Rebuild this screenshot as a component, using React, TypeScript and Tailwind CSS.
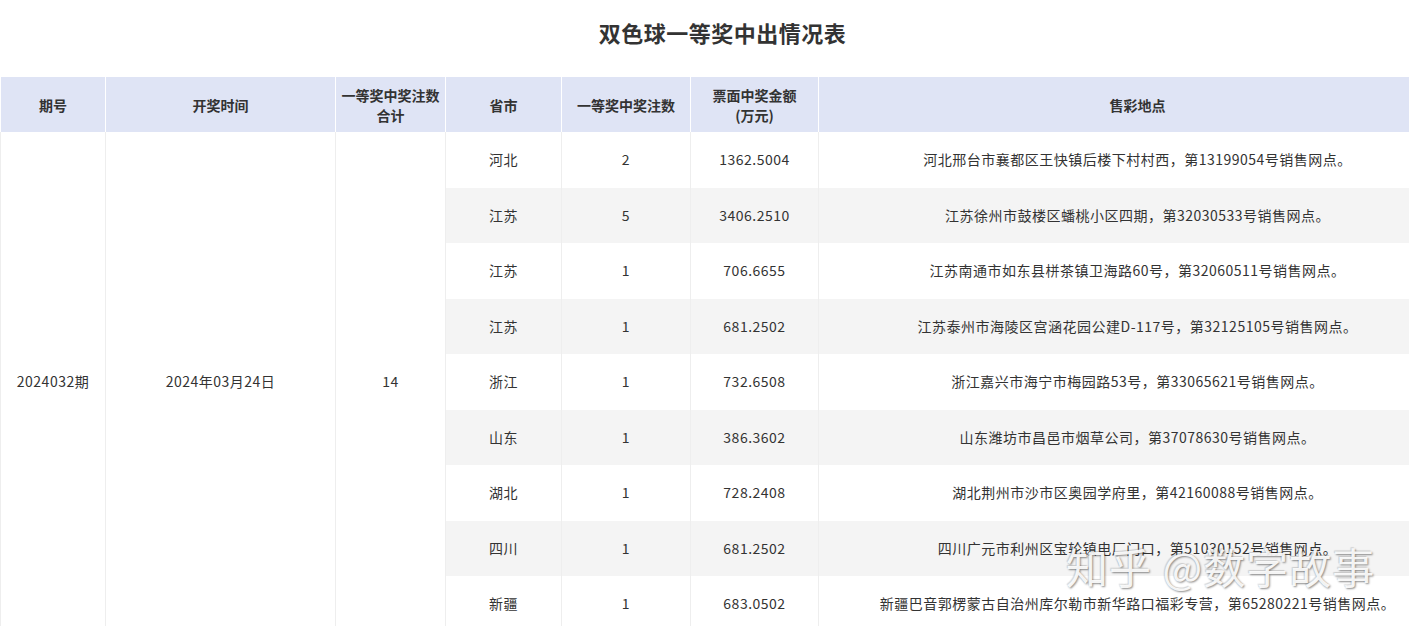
import React from "react";

const rows = [
  ["河北", "2", "1362.5004", "河北邢台市襄都区王快镇后楼下村村西，第13199054号销售网点。"],
  ["江苏", "5", "3406.2510", "江苏徐州市鼓楼区蟠桃小区四期，第32030533号销售网点。"],
  ["江苏", "1", "706.6655", "江苏南通市如东县栟茶镇卫海路60号，第32060511号销售网点。"],
  ["江苏", "1", "681.2502", "江苏泰州市海陵区宫涵花园公建D-117号，第32125105号销售网点。"],
  ["浙江", "1", "732.6508", "浙江嘉兴市海宁市梅园路53号，第33065621号销售网点。"],
  ["山东", "1", "386.3602", "山东潍坊市昌邑市烟草公司，第37078630号销售网点。"],
  ["湖北", "1", "728.2408", "湖北荆州市沙市区奥园学府里，第42160088号销售网点。"],
  ["四川", "1", "681.2502", "四川广元市利州区宝轮镇电厂门口，第51030152号销售网点。"],
  ["新疆", "1", "683.0502", "新疆巴音郭楞蒙古自治州库尔勒市新华路口福彩专营，第65280221号销售网点。"],
];

export default function App() {
  return (
    <div
      className="relative w-full h-[626px] overflow-hidden bg-white text-[#333]"
      style={{ fontFamily: '"Noto Sans CJK SC", "Noto Sans", sans-serif' }}
    >
      <div className="w-[1456px]">
        <div className="w-[1445px] h-[77px] flex items-center justify-center pb-[12px]">
          <h1 className="text-[22px] font-bold text-[#333] tracking-[0.5px]">双色球一等奖中出情况表</h1>
        </div>
        <table className="w-[1456px] table-fixed border-collapse text-[14px]">
          <colgroup>
            <col className="w-[105px]" />
            <col className="w-[230px]" />
            <col className="w-[110px]" />
            <col className="w-[116px]" />
            <col className="w-[129px]" />
            <col className="w-[128px]" />
            <col className="w-[638px]" />
          </colgroup>
          <thead>
            <tr className="h-[55px] bg-[#dfe4f5] leading-[20px] text-[#333]">
              <th className="border-x border-white font-semibold">期号</th>
              <th className="border-x border-white font-semibold">开奖时间</th>
              <th className="border-x border-white font-semibold">一等奖中奖注数<br />合计</th>
              <th className="border-x border-white font-semibold">省市</th>
              <th className="border-x border-white font-semibold">一等奖中奖注数</th>
              <th className="border-x border-white font-semibold">票面中奖金额<br />(万元)</th>
              <th className="border-x border-white font-semibold">售彩地点</th>
            </tr>
          </thead>
          <tbody className="tracking-[0.5px]">
            {rows.map((r, i) => (
              <tr key={i} className="h-[55.5px]">
                {i === 0 && (
                  <>
                    <td rowSpan={9} className="border-x border-[#eeeeee] bg-white text-center">2024032期</td>
                    <td rowSpan={9} className="border-x border-[#eeeeee] bg-white text-center">2024年03月24日</td>
                    <td rowSpan={9} className="border-x border-[#eeeeee] bg-white text-center">14</td>
                  </>
                )}
                {r.map((c, j) => (
                  <td
                    key={j}
                    className={`border-x border-[#eeeeee] text-center ${i % 2 === 1 ? "bg-[#f4f4f4]" : "bg-white"}`}
                  >
                    {c}
                  </td>
                ))}
              </tr>
            ))}
          </tbody>
        </table>
      </div>
      <div className="absolute left-[1066px] top-[540px] text-[42px] leading-[52px] text-white/90 tracking-[1px] whitespace-nowrap pointer-events-none [text-shadow:1px_1px_2px_rgba(0,0,0,0.45),-1px_-1px_1px_rgba(0,0,0,0.15)]">
        知乎 @数字故事
      </div>
    </div>
  );
}
